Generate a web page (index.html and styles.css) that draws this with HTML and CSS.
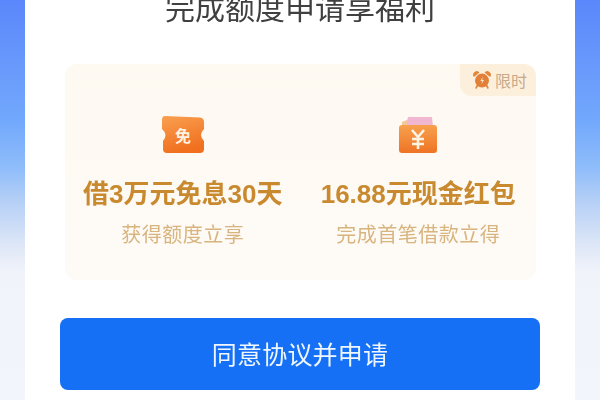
FILE: index.html
```html
<!DOCTYPE html>
<html lang="zh-CN">
<head>
    <meta charset="UTF-8">
    <meta name="viewport" content="width=device-width, initial-scale=1.0">
    <title>完成额度申请享福利</title>
    <link rel="stylesheet" href="styles.css">
</head>
<body>
    <main class="card">
        <h1 class="title">完成额度申请享福利</h1>
        <section class="panel">
            <div class="badge">
                <svg class="badge-icon" viewBox="0 0 18 18">
                    <path d="M1 6 A3.400 3.400 0 0 1 6.500 1.600 Z M17 6 A3.400 3.400 0 0 0 11.500 1.600 Z" fill="#e2863a"/>
                    <path d="M4.500 14.200 L3.200 16.800 M13.500 14.200 L14.800 16.800" stroke="#e2863a" stroke-width="1.800" stroke-linecap="round"/>
                    <circle cx="9" cy="9.600" r="7" fill="#e2803a"/>
                    <path d="M9.600 6 L7.400 10 H9.200 L8.500 13 L11 8.900 H9.300 Z" fill="#fbe6c8"/>
                </svg>
                <span>限时</span>
            </div>
            <div class="benefit">
                <svg class="benefit-icon" viewBox="0 0 44 40">
                    <defs>
                        <linearGradient id="ticket" x1="0" y1="0" x2="0.3" y2="1">
                            <stop offset="0" stop-color="#f9a050"/>
                            <stop offset="1" stop-color="#f0701f"/>
                        </linearGradient>
                    </defs>
                    <path d="M4 1 L39 2.500 Q43 3 43 7 V14 Q40 17 40 20 Q40 23 43 26 V34 Q43 38 39 38 H6 Q2 38 2 34 V26 Q4.500 23 4.500 20 Q4.500 17 1 14 V5 Q1 1 4 1 Z" fill="url(#ticket)"/>
                    <text class="ticket-text" x="22" y="26.500">免</text>
                </svg>
                <h2 class="benefit-name">借3万元免息30天</h2>
                <p class="benefit-note">获得额度立享</p>
            </div>
            <div class="benefit">
                <svg class="benefit-icon" viewBox="0 0 44 40">
                    <defs>
                        <linearGradient id="pocket" x1="0" y1="0" x2="0" y2="1">
                            <stop offset="0" stop-color="#f7a14e"/>
                            <stop offset="1" stop-color="#ee7424"/>
                        </linearGradient>
                    </defs>
                    <path d="M10 10 L12 2 L36 2 L37 12 Z" fill="#f1b6d2"/>
                    <path d="M6 7 L11 5 L11 12 H6 Z" fill="#f4c49b"/>
                    <rect x="3" y="10" width="38" height="28" rx="3" fill="url(#pocket)"/>
                    <path d="M16 15 L22 22 L28 15 M16 24 H28 M16 29 H28 M22 22 V34" fill="none" stroke="#fff3e2" stroke-width="2.600"/>
                </svg>
                <h2 class="benefit-name">16.88元现金红包</h2>
                <p class="benefit-note">完成首笔借款立得</p>
            </div>
        </section>
        <button class="apply-btn">同意协议并申请</button>
    </main>
</body>
</html>
```

FILE: styles.css
```css
* {
    box-sizing: border-box;
    font-family: "Liberation Sans", "Noto Sans CJK SC", sans-serif;
}
html, body {
    margin: 0;
    height: 400px;
    overflow: hidden;
}
body {
    padding: 0 25px;
    background: linear-gradient(180deg, #5a87fb 0%, #6a9bfc 18%, #72a8fc 30%, #8fbdfa 42%, #b4cff6 50%, #e0e8f7 62%, #f0f3fa 68%, #f2f5fc 100%);
}
.card {
    display: flex;
    flex-direction: column;
    align-items: center;
    height: 400px;
    padding: 0 35px;
    background-color: #fff;
    overflow: hidden;
}
.title {
    margin: -9px 0 0;
    font-size: 30px;
    line-height: 36px;
    font-weight: 400;
    color: #404040;
    filter: blur(0.4px);
}
.panel {
    position: relative;
    display: grid;
    grid-template-columns: 1fr 1fr;
    width: 471px;
    height: 216px;
    margin-top: 37px;
    margin-left: 1px;
    padding-top: 51px;
    border-radius: 12px;
    background: linear-gradient(180deg, #fef9f1 0%, #fefaf6 100%);
    filter: blur(0.5px);
}
.badge {
    position: absolute;
    top: 0;
    right: 0;
    display: flex;
    align-items: center;
    gap: 4px;
    width: 76px;
    height: 32px;
    padding-left: 13px;
    border-radius: 0 12px 0 12px;
    background-color: #fcf0dd;
    color: #c9a988;
    font-size: 16px;
}
.badge-icon {
    width: 18px;
    height: 18px;
}
.benefit {
    display: flex;
    flex-direction: column;
    align-items: center;
}
.benefit-icon {
    width: 44px;
    height: 40px;
}
.ticket-text {
    font-size: 16px;
    font-weight: 700;
    fill: #fff2e2;
    text-anchor: middle;
}
.benefit-name {
    margin: 24px 0 0;
    font-size: 26px;
    line-height: 30px;
    font-weight: 700;
    color: #c98a2f;
}
.benefit-note {
    margin: 12px 0 0;
    font-size: 20px;
    line-height: 28px;
    letter-spacing: 0.5px;
    color: #d8b47e;
}
.apply-btn {
    flex: none;
    width: 480px;
    height: 72px;
    margin-top: 38px;
    padding-bottom: 3px;
    border: none;
    border-radius: 8px;
    background-color: #1570f5;
    color: #eef6ff;
    font-size: 25px;
    letter-spacing: 0.2px;
    filter: blur(0.3px);
}
```
